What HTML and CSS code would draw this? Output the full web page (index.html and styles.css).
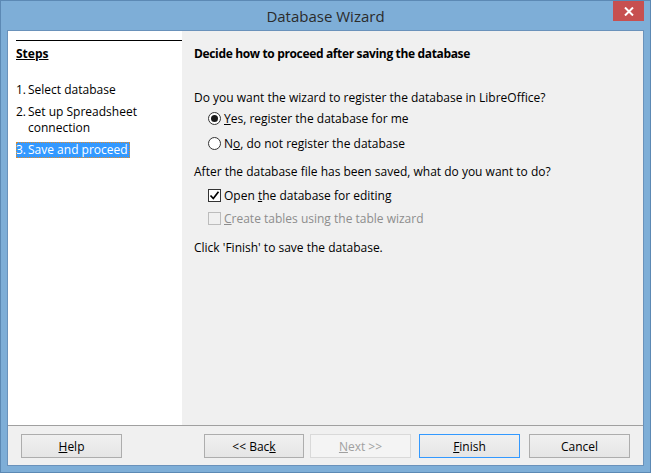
FILE: index.html
```html
<!DOCTYPE html>
<html>
<head>
<meta charset="utf-8">
<link rel="stylesheet" href="styles.css">
</head>
<body>
<div class="window">
  <div class="titlebar">
    <div class="title">Database Wizard</div>
    <div class="close"><svg width="10" height="9" viewBox="0 0 10 9"><path d="M1 0.5 L9 8.5 M9 0.5 L1 8.5" stroke="#fff" stroke-width="2"/></svg></div>
  </div>
  <div class="client">
    <div class="main">
      <div class="steps">
        <div class="steps-head"><u>Steps</u></div>
        <ol class="step-list">
          <li class="step"><span class="num">1.</span><span class="lbl">Select database</span></li>
          <li class="step"><span class="num">2.</span><span class="lbl">Set up Spreadsheet connection</span></li>
          <li class="step active"><span class="sel"><span class="num">3.</span><span class="lbl">Save and proceed</span></span></li>
        </ol>
      </div>
      <div class="page">
        <div class="heading">Decide how to proceed after saving the database</div>
        <div class="q q1">Do you want the wizard to register the database in LibreOffice?</div>
        <div class="opt opt-first"><span class="radio checked"></span><span><u>Y</u>es, register the database for me</span></div>
        <div class="opt opt-second"><span class="radio"></span><span>N<u>o</u>, do not register the database</span></div>
        <div class="q q2">After the database file has been saved, what do you want to do?</div>
        <div class="opt opt-first2"><span class="check checked"><svg width="11" height="11" viewBox="0 0 11 11"><path d="M1.5 5.5 L4.3 8.5 L9.5 1.8" fill="none" stroke="#000" stroke-width="1.7"/></svg></span><span>Open <u>t</u>he database for editing</span></div>
        <div class="opt disabled"><span class="check"></span><span><u>C</u>reate tables using the table wizard</span></div>
        <div class="q q3">Click 'Finish' to save the database.</div>
      </div>
    </div>
    <div class="buttons">
      <button class="btn"><u>H</u>elp</button>
      <div class="spacer"></div>
      <button class="btn btn-back">&lt;&lt; Bac<u>k</u></button>
      <button class="btn btn-next disabled-btn"><u>N</u>ext &gt;&gt;</button>
      <button class="btn btn-finish default-btn"><u>F</u>inish</button>
      <button class="btn btn-cancel">Cancel</button>
    </div>
  </div>
</div>
</body>
</html>
```
FILE: styles.css
```css
* { box-sizing: border-box; }
html, body { margin: 0; padding: 0; }
body {
  width: 651px;
  height: 473px;
  overflow: hidden;
  font-family: "Open Sans", "Noto Sans", sans-serif;
  font-size: 12px;
  color: #000;
}
.window {
  width: 651px;
  height: 473px;
  background: #7eaed7;
  border: 1px solid #5c89b4;
  display: flex;
  flex-direction: column;
}
.titlebar {
  height: 29px;
  position: relative;
  display: flex;
  align-items: center;
  justify-content: center;
  flex: none;
}
.title {
  font-size: 15px;
  color: #2b2b2b;
  margin-top: 1px;
}
.close {
  position: absolute;
  right: 6px;
  top: 0;
  width: 31px;
  height: 20px;
  background: #c75050;
  display: flex;
  align-items: center;
  justify-content: center;
}
.client {
  margin: 0 6px 6px 6px;
  flex: 1;
  border: 1px solid #6a92bb;
  background: #f0f0f0;
  display: flex;
  flex-direction: column;
}
.main {
  flex: 1;
  display: flex;
  border-bottom: 1px solid #a0a0a0;
}
.steps {
  width: 174px;
  background: #fff;
  padding: 9px 0 0 8px;
  flex: none;
}
.steps-head {
  border-top: 1px solid #000;
  font-weight: bold;
  line-height: 16px;
  padding-top: 5px;
}
.step-list {
  list-style: none;
  margin: 20px 0 0 0;
  padding: 0;
}
.step {
  display: flex;
  line-height: 16px;
  margin-bottom: 6px;
}
.step.active { margin-top: 2px; }
.num { width: 12px; flex: none; }
.lbl { width: 130px; }
.sel {
  display: inline-flex;
  background: #3399ff;
  color: #fff;
  outline: 1px dotted #e08a2a;
  outline-offset: -1px;
  padding-right: 2px;
}
.sel .lbl { width: auto; }
.page {
  flex: 1;
  padding: 15px 0 0 12px;
}
.heading {
  font-weight: bold;
  line-height: 16px;
  letter-spacing: -0.35px;
}
.q { line-height: 16px; }
.q1 { margin-top: 28px; }
.q2 { margin-top: 11px; }
.q3 { margin-top: 12px; }
.opt {
  display: flex;
  align-items: center;
  height: 20px;
  margin-left: 14px;
  margin-top: 3px;
  gap: 3px;
}
.opt-first { margin-top: 2px; }
.opt-second { margin-top: 5px; }
.opt-first2 { margin-top: 5px; }
.radio {
  width: 13px;
  height: 13px;
  border: 1px solid #333;
  border-radius: 50%;
  background: #fff;
  position: relative;
  flex: none;
}
.radio.checked::after {
  content: "";
  position: absolute;
  left: 2px; top: 2px;
  width: 7px; height: 7px;
  border-radius: 50%;
  background: #1a1a1a;
}
.check {
  width: 13px;
  height: 13px;
  border: 1px solid #333;
  background: #fff;
  flex: none;
  display: flex;
  align-items: center;
  justify-content: center;
}
.disabled { color: #8d8d8d; }
.disabled .check { border-color: #bcbcbc; background: #f0f0f0; }
.buttons {
  height: 39px;
  flex: none;
  display: flex;
  padding: 8px 13px 0 13px;
  align-items: flex-start;
}
.spacer { flex: 1; }
.btn {
  width: 101px;
  height: 24px;
  font-family: inherit;
  font-size: 12px;
  color: #000;
  border: 1px solid #adadad;
  background: linear-gradient(#f0f0f0, #e5e5e5);
  padding: 0;
  margin: 0;
}
.btn-back { width: 100px; }
.btn-next { width: 101px; margin-left: 6px; }
.btn-finish { margin-left: 8px; }
.btn-cancel { margin-left: 9px; }
.disabled-btn {
  color: #a0a0a0;
  border-color: #d9d9d9;
  background: #f4f4f4;
}
.default-btn { border-color: #3399ff; }
```
